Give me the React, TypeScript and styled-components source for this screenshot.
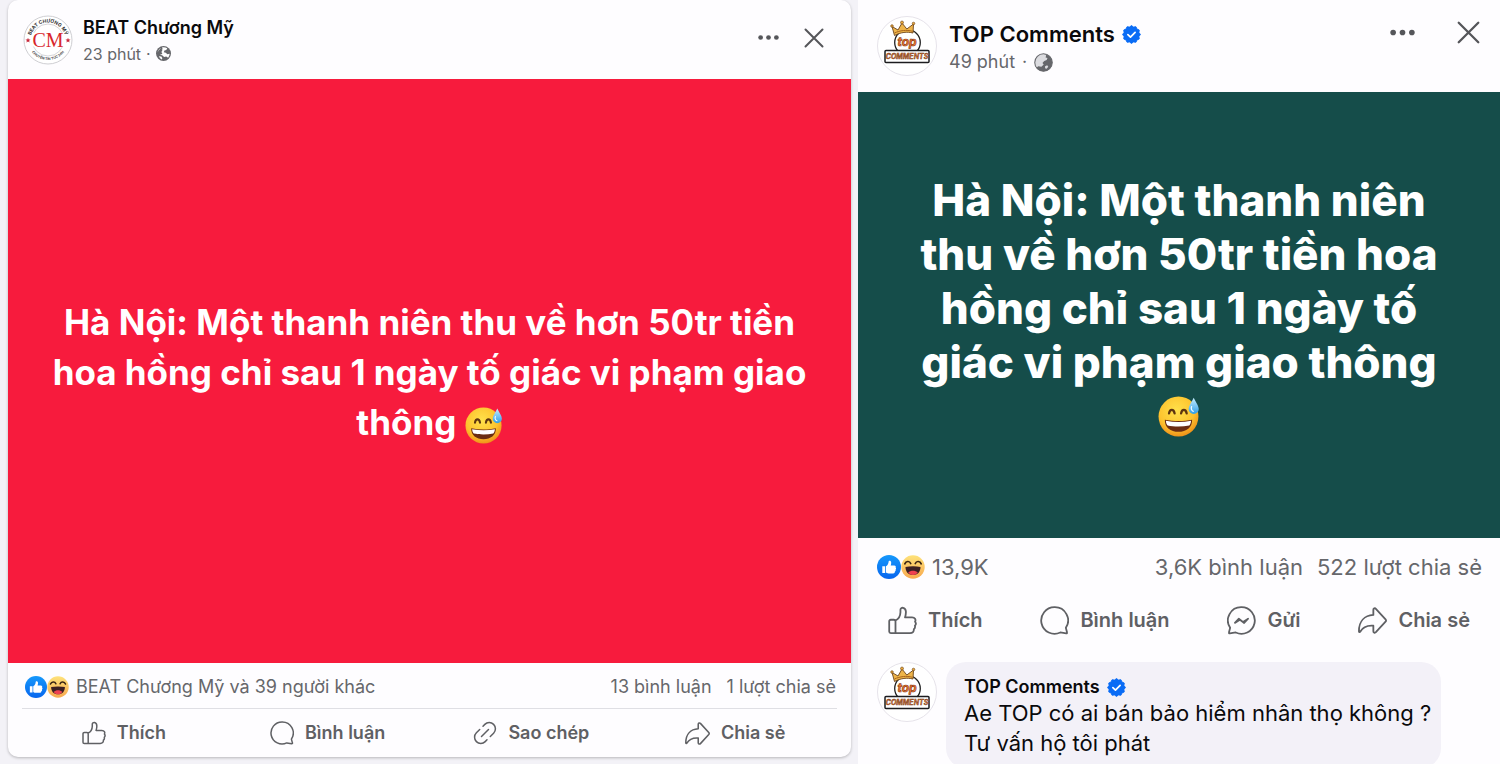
import React, { useId } from "react";
import styled, { createGlobalStyle } from "styled-components";

const GlobalStyle = createGlobalStyle`
  *, *::before, *::after { box-sizing: border-box; }
  body {
    margin: 0;
    background: #f3f2f7;
    font-family: Inter, "Liberation Sans", sans-serif;
    color: #0a0a0c;
  }
  h2, p { margin: 0; font-weight: inherit; font-size: inherit; }
`;

const Page = styled.main`
  display: grid;
  grid-template-columns: minmax(0, 843fr) minmax(0, 642fr);
  gap: 7px;
  height: 100vh;
  padding-left: 8px;
  align-items: start;
  overflow-y: auto;
  scrollbar-width: none;
`;

const Post = styled.article<{ $card?: boolean }>`
  display: flex;
  flex-direction: column;
  background: #fefdff;
  border-radius: ${(p) => (p.$card ? "10px" : "0")};
  box-shadow: ${(p) => (p.$card ? "0 1px 3px rgba(0, 0, 0, 0.25)" : "none")};
`;

const Header = styled.header<{ $large?: boolean }>`
  display: flex;
  align-items: center;
  gap: ${(p) => (p.$large ? "12px" : "10px")};
  height: ${(p) => (p.$large ? "92px" : "79px")};
  padding: ${(p) => (p.$large ? "0 20px 0 19px" : "0 27px 0 15px")};
`;

const Identity = styled.div<{ $large?: boolean }>`
  display: flex;
  flex-direction: column;
  flex: 1;
  gap: ${(p) => (p.$large ? "4px" : "2px")};
  padding-top: ${(p) => (p.$large ? "4px" : "2px")};
`;

const Name = styled.h2<{ $size: number }>`
  display: flex;
  align-items: center;
  gap: 7px;
  font-size: ${(p) => p.$size}px;
  font-weight: 600;
  line-height: 24px;
`;

const Meta = styled.p<{ $large?: boolean }>`
  display: flex;
  align-items: center;
  gap: ${(p) => (p.$large ? "7px" : "5px")};
  color: #66676b;
  font-size: ${(p) => (p.$large ? "18px" : "16px")};
  line-height: 24px;
`;

const HeaderActions = styled.div<{ $large?: boolean }>`
  display: flex;
  align-items: center;
  gap: ${(p) => (p.$large ? "42px" : "25px")};
  padding-bottom: ${(p) => (p.$large ? "28px" : "4px")};
`;

const IconButton = styled.button`
  display: flex;
  padding: 0;
  border: 0;
  background: none;
  color: #55565a;
  cursor: pointer;
`;

const Banner = styled.div<{ $tone: "red" | "green" }>`
  display: flex;
  flex-direction: column;
  align-items: center;
  justify-content: center;
  min-height: ${(p) => (p.$tone === "red" ? "584px" : "446px")};
  padding: ${(p) => (p.$tone === "red" ? "2px 0 0" : "0 0 14px")};
  background: ${(p) => (p.$tone === "red" ? "#f71b3d" : "#154d4a")};
  color: #fff;
  font-size: ${(p) => (p.$tone === "red" ? "35px" : "44px")};
  line-height: ${(p) => (p.$tone === "red" ? "50px" : "54px")};
  font-weight: ${(p) => (p.$tone === "red" ? 700 : 800)};
  text-align: center;
  white-space: nowrap;

  p svg { vertical-align: middle; }
  > svg { margin: 6px 0; }
`;

const Stats = styled.div<{ $large?: boolean }>`
  display: flex;
  align-items: center;
  gap: ${(p) => (p.$large ? "14px" : "15px")};
  height: ${(p) => (p.$large ? "58px" : "45px")};
  padding: ${(p) => (p.$large ? "0 18px 0 19px" : "2px 15px 0 17px")};
  color: #66676b;
  font-size: ${(p) => (p.$large ? "22px" : "18px")};
  line-height: 28px;
`;

const Reactions = styled.div`
  display: flex;
  align-items: center;
  flex: 1;

  svg + span { margin-left: 7px; }
`;

const Actions = styled.div`
  display: grid;
  grid-template-columns: repeat(4, 1fr);
  height: 49px;
  margin: 0 14px;
  border-top: 1px solid #dfdfe4;
`;

const WideActions = styled.div`
  display: flex;
  justify-content: space-between;
  height: 48px;
  padding: 0 30px;
`;

const Action = styled.button<{ $large?: boolean }>`
  display: flex;
  align-items: center;
  justify-content: center;
  gap: 11px;
  padding: 0;
  border: 0;
  background: none;
  color: #5f6064;
  font-family: inherit;
  font-size: ${(p) => (p.$large ? "20px" : "18px")};
  font-weight: 600;
  line-height: 28px;
  cursor: pointer;
`;

const Comment = styled.section`
  display: flex;
  align-items: flex-start;
  gap: 9px;
  padding: 18px 19px 0;
`;

const Bubble = styled.div`
  padding: 14px 10px 10px 18px;
  border-radius: 20px;
  background: #f3f1f8;
  font-size: 22px;
  line-height: 30px;
  white-space: nowrap;

  h2 { line-height: 22px; }
`;

function BeatLogo() {
  const id = useId();
  return (
    <svg width="50" height="50" viewBox="0 0 50 50" role="img" aria-label="BEAT Chương Mỹ">
      <defs>
        <path id={id + "t"} d="M7.500 25a17.500 17.500 0 0 1 35 0" />
        <path id={id + "b"} d="M4.500 24.500a20.500 20.500 0 0 0 41 0" />
      </defs>
      <circle cx="25" cy="25" r="24" fill="#fff" stroke="#cfcfd3" />
      <circle cx="25" cy="25" r="16" fill="none" stroke="#c4c4c8" strokeWidth=".7" />
      <rect x="7" y="18" width="36" height="13.500" fill="#fff" />
      <text fontSize="4.900" fontWeight="700" fill="#333" textAnchor="middle">
        <textPath href={"#" + id + "t"} startOffset="50%">BEAT CHƯƠNG MỸ</textPath>
      </text>
      <text fontSize="3.400" fontWeight="700" fill="#444" textAnchor="middle">
        <textPath href={"#" + id + "b"} startOffset="50%">CHUYÊN TIN TỨC 24H</textPath>
      </text>
      <text x="25" y="31.500" fontFamily="Liberation Serif, serif" fontSize="20" fill="#d8262c" textAnchor="middle">CM</text>
      <path d="M5 22.800l.7 1.700 1.800.1-1.400 1.200.5 1.800L5 26.600l-1.600 1 .5-1.800-1.400-1.200 1.800-.1zM45 22.800l.7 1.700 1.800.1-1.400 1.200.5 1.800-1.600-1-1.600 1 .5-1.800-1.400-1.200 1.800-.1z" fill="#c9273a" />
    </svg>
  );
}

function TopLogo() {
  return (
    <svg width="60" height="60" viewBox="0 0 60 60" role="img" aria-label="TOP Comments">
      <circle cx="30" cy="30" r="29.500" fill="#fff" stroke="#e6e3ea" />
      <circle cx="30.500" cy="26.500" r="12.800" fill="#fff" stroke="#222" strokeWidth="1.300" />
      <path d="M17.500 19.500L15 10.500l6 3.500L25 7l4.800 6 6.700-5-.5 9c-6-1.500-12-.8-18.500 2.500z" fill="#eeb54a" stroke="#6b431b" strokeWidth=".9" strokeLinejoin="round" />
      <path d="M17.500 17c5.500-2.500 12-3.500 18-1.700" fill="none" stroke="#a8641d" strokeWidth="1" />
      <g fill="#e9a93b" stroke="#6b431b" strokeWidth=".6"><circle cx="15" cy="10" r="1.300" /><circle cx="25" cy="6.500" r="1.500" /><circle cx="36.500" cy="7.500" r="1.300" /></g>
      <text x="30" y="30" fontSize="12" fontWeight="700" fontStyle="italic" fill="#ee7a35" stroke="#8a3510" strokeWidth=".6" textAnchor="middle">top</text>
      <rect x="8" y="34.500" width="44" height="12" rx="1" fill="#fff" stroke="#1c1c1f" strokeWidth="1.500" />
      <text x="30" y="43" fontSize="7" fontWeight="700" fontStyle="italic" fill="#dd7c3b" stroke="#6b2f12" strokeWidth=".4" textAnchor="middle">COMMENTS</text>
    </svg>
  );
}

function Verified() {
  const points = Array.from({ length: 24 }, (_, i) => {
    const r = i % 2 ? 8.1 : 9.4;
    const a = (i * Math.PI) / 12;
    return `${10 + r * Math.cos(a)},${10 + r * Math.sin(a)}`;
  }).join(" ");
  return (
    <svg width="19" height="19" viewBox="0 0 20 20" aria-hidden="true">
      <polygon points={points} fill="#0a6cf5" stroke="#0a6cf5" strokeLinejoin="round" />
      <path d="M6.200 10.200l2.700 2.600 4.900-5" fill="none" stroke="#fff" strokeWidth="1.800" strokeLinecap="round" strokeLinejoin="round" />
    </svg>
  );
}

function Globe({ size }: { size: number }) {
  return (
    <svg width={size} height={size} viewBox="0 0 16 16" aria-label="Công khai">
      <circle cx="8" cy="8" r="8" fill="#66676b" />
      <path d="M6.500 1.400C8.500 1 10.500 1.400 12 2.500L11 4.200 9 4.800 8.300 6.600l2.200.6 1.600 1.600 2.400-.6c0 1.500-.6 3-1.600 4.200l-2-1.200-2.300.6L7 10.200 4.800 9.400 3.600 7.200l-1.800-.8C2.300 4.800 3.300 3.400 4.700 2.400L5.500 4 7 3.200z" fill="#fff" />
      <path d="M2.300 5.200l2.500-2.600L7 4 5.800 6.500l1 2L4.500 9 2 8z" fill="#66676b" />
      <path d="M3 10.800l2.700.4 1 1.500-.4 1.600C4.900 13.700 3.700 12.500 3 10.800z" fill="#fff" />
    </svg>
  );
}

function NightGlobe({ size }: { size: number }) {
  return (
    <svg width={size} height={size} viewBox="0 0 18 18" aria-label="Công khai">
      <circle cx="9" cy="9" r="8.300" fill="#dcdce0" stroke="#66676b" strokeWidth="1" />
      <path d="M9.500 1l2 1.200-.5 2 1.800.5-.8 2-2.300.8-1.700 2 1.200 1.500-2.200 2L4 12.500 2.300 14A8.300 8.300 0 0 0 9 17.300 8.300 8.300 0 0 0 17.300 9 8.300 8.300 0 0 0 9.500 1z" fill="#66676b" />
      <path d="M10.500 12.500l2-1 1 1.500-1.500 2-1.500-.5z" fill="#dcdce0" />
    </svg>
  );
}

function Dots({ size }: { size: number }) {
  return (
    <svg width={size} height={size} viewBox="0 0 24 24" fill="currentColor" aria-hidden="true">
      <circle cx="3" cy="12" r="2.700" /><circle cx="12" cy="12" r="2.700" /><circle cx="21" cy="12" r="2.700" />
    </svg>
  );
}

function Close({ size }: { size: number }) {
  return (
    <svg width={size} height={size} viewBox="0 0 20 20" fill="none" stroke="currentColor" strokeWidth="2" strokeLinecap="round" aria-hidden="true">
      <path d="M1.500 1.500l17 17M18.500 1.500l-17 17" />
    </svg>
  );
}

function LikeBadge({ size }: { size: number }) {
  const id = useId();
  return (
    <svg width={size} height={size} viewBox="0 0 24 24" aria-hidden="true">
      <linearGradient id={id} x2="0" y2="1"><stop stopColor="#1598fb" /><stop offset="1" stopColor="#0866ee" /></linearGradient>
      <circle cx="12" cy="12" r="12" fill={`url(#${id})`} />
      <path d="M5.300 11.200h2.900v6.900H5.300zM9 11.300c1.700-1 2.500-2.600 2.600-4.500 0-1.600 2.600-1.500 2.600.9 0 1-.2 1.800-.5 2.700h3.600c1.300 0 1.900 1.200 1.300 2.200.7.700.6 1.700-.1 2.200.4.900 0 1.600-.7 1.900.1 1-.5 1.700-1.700 1.700h-3.500c-1.500 0-2.500-.3-3.600-1z" fill="#fff" />
    </svg>
  );
}

function HahaBadge({ size }: { size: number }) {
  const id = useId();
  return (
    <svg width={size} height={size} viewBox="0 0 24 24" aria-hidden="true">
      <linearGradient id={id} x2="0" y2="1"><stop stopColor="#fee27a" /><stop offset="1" stopColor="#f8a94f" /></linearGradient>
      <circle cx="12" cy="12" r="11.700" fill={`url(#${id})`} />
      <path d="M3.800 8.800C5 6 8.500 5.600 9.700 8.500M14.300 8.500c1.200-2.900 4.700-2.500 5.900.3" fill="none" stroke="#3a2413" strokeWidth="1.700" strokeLinecap="round" />
      <path d="M4.500 12c4.500-.9 10.500-.9 15 0 0 5-3 8-7.500 8s-7.500-3-7.500-8z" fill="#3b1f22" />
      <path d="M7.200 17.500c2.500-2.500 7.100-2.500 9.600 0C15.500 19.200 14 20 12 20s-3.500-.8-4.800-2.500z" fill="#ef4150" />
    </svg>
  );
}

function SweatSmile({ size }: { size: number }) {
  const id = useId();
  return (
    <svg width={size} height={size} viewBox="0 0 40 40" role="img" aria-label="😅">
      <radialGradient id={id + "f"} cx=".45" cy=".35" r=".68"><stop stopColor="#ffe14b" /><stop offset=".65" stopColor="#fdc32e" /><stop offset="1" stopColor="#ee8b17" /></radialGradient>
      <linearGradient id={id + "d"} x2="0" y2="1"><stop stopColor="#c8efff" /><stop offset="1" stopColor="#2f9ee8" /></linearGradient>
      <circle cx="19.500" cy="20.500" r="19" fill={`url(#${id}f)`} />
      <path d="M10.500 17.500c.8-4.500 4.500-4.500 5.300 0M22 17.500c.8-4.500 4.500-4.500 5.300 0" fill="none" stroke="#5d3510" strokeWidth="2.200" strokeLinecap="round" />
      <path d="M6.500 23.500c8.500 1.800 18 1.800 26 0 .2 7.500-5.500 11.500-13 11.500s-13.200-4-13-11.500z" fill="#6b2c12" />
      <path d="M7.500 24.500c8 1.500 16.500 1.500 24 0-.3 2.500-.9 3.600-1.700 4.500-6.500 1.200-14.600 1.200-20.600 0-.8-.9-1.500-2-1.700-4.500z" fill="#fff" />
      <path d="M34 2.500c1.800 4 4.800 7.500 4.800 10.800a4.800 4.800 0 0 1-9.600 0c0-3.300 3-6.800 4.800-10.800z" fill={`url(#${id}d)`} />
      <path d="M32 11c-.8 2 0 4 1.600 4.500" fill="none" stroke="#f2fcff" strokeWidth="1.200" strokeLinecap="round" />
    </svg>
  );
}

const LineIcon = styled.svg.attrs({ viewBox: "0 0 24 24", "aria-hidden": true })<{ $size: number }>`
  width: ${(p) => p.$size}px;
  height: ${(p) => p.$size}px;
  flex: none;
  fill: none;
  stroke: currentColor;
  stroke-width: 1.5;
  stroke-linecap: round;
  stroke-linejoin: round;
`;

const LikeIcon = ({ size }: { size: number }) => (
  <LineIcon $size={size}>
    <path d="M6.200 22.500H2.300a1.300 1.300 0 0 1-1.300-1.300V12.700a1.300 1.300 0 0 1 1.300-1.300h2.600a1.300 1.300 0 0 1 1.300 1.300zM6.200 12c2.600-1.200 4-3.600 4.100-6.800V3.100c0-2.400 4.300-2.400 4.500 1.500.1 1.600-.2 3.200-.7 4.800h5.800c2.400 0 3.400 1.900 2.500 3.600.8 1 .8 2.400-.1 3.300.3 1.200 0 2.200-.9 2.900.1 2-1 3.300-3.200 3.300H6.200" />
  </LineIcon>
);

const CommentIcon = ({ size }: { size: number }) => (
  <LineIcon $size={size}>
    <path d="M12 1a11 11 0 1 0 4.800 20.900l4.900.8c.5.100.9-.3.700-.8l-1-3.800A11 11 0 0 0 12 1z" />
  </LineIcon>
);

const CopyIcon = ({ size }: { size: number }) => (
  <LineIcon $size={size}>
    <path d="M10 5.200l1.800-1.800a6.200 6.200 0 0 1 8.800 8.800l-3.300 3.300M14 18.800l-1.800 1.800a6.200 6.200 0 0 1-8.800-8.800l3.300-3.300M8.500 15.500l7-7" />
  </LineIcon>
);

const ShareIcon = ({ size }: { size: number }) => (
  <LineIcon $size={size}>
    <path d="M12.700 7.400V3.200c0-1.200 1.300-1.700 2.100-.9l8 8.700c.5.600.5 1.400 0 2l-8 8.700c-.8.800-2.100.3-2.100-.9v-4.500C7.500 15.900 4 17.300 1.800 21.300c-.3.500-1 .3-1-.3C.7 12.500 5.500 7.900 12.700 7.400z" />
  </LineIcon>
);

const SendIcon = ({ size }: { size: number }) => (
  <LineIcon $size={size}>
    <path d="M12 1a11 11 0 1 1-4.800 20.900l-4.900.8c-.5.100-.9-.3-.7-.8l1-3.800A11 11 0 0 1 12 1z" />
    <path d="M6.500 14l3.300-3.500 3.400 2.700 4.300-2.700-3.300 3.600-3.500-2.700z" strokeWidth="1.400" />
  </LineIcon>
);

export default function App() {
  return (
    <>
      <GlobalStyle />
      <Page>
        <Post $card>
          <Header>
            <BeatLogo />
            <Identity>
              <Name $size={18}>BEAT Chương Mỹ</Name>
              <Meta>23 phút <span>·</span> <Globe size={15} /></Meta>
            </Identity>
            <HeaderActions>
              <IconButton aria-label="Tùy chọn khác"><Dots size={21} /></IconButton>
              <IconButton aria-label="Đóng"><Close size={20} /></IconButton>
            </HeaderActions>
          </Header>
          <Banner $tone="red">
            <p>
              Hà Nội: Một thanh niên thu về hơn 50tr tiền<br />
              hoa hồng chỉ sau 1 ngày tố giác vi phạm giao<br />
              thông <SweatSmile size={38} />
            </p>
          </Banner>
          <Stats>
            <Reactions><LikeBadge size={22} /><HahaBadge size={22} /><span>BEAT Chương Mỹ và 39 người khác</span></Reactions>
            <span>13 bình luận</span>
            <span>1 lượt chia sẻ</span>
          </Stats>
          <Actions>
            <Action><LikeIcon size={24} />Thích</Action>
            <Action><CommentIcon size={24} />Bình luận</Action>
            <Action><CopyIcon size={24} />Sao chép</Action>
            <Action><ShareIcon size={25} />Chia sẻ</Action>
          </Actions>
        </Post>

        <Post>
          <Header $large>
            <TopLogo />
            <Identity $large>
              <Name $size={22}>TOP Comments <Verified /></Name>
              <Meta $large>49 phút <span>·</span> <NightGlobe size={19} /></Meta>
            </Identity>
            <HeaderActions $large>
              <IconButton aria-label="Tùy chọn khác"><Dots size={25} /></IconButton>
              <IconButton aria-label="Đóng"><Close size={23} /></IconButton>
            </HeaderActions>
          </Header>
          <Banner $tone="green">
            <p>
              Hà Nội: Một thanh niên<br />
              thu về hơn 50tr tiền hoa<br />
              hồng chỉ sau 1 ngày tố<br />
              giác vi phạm giao thông
            </p>
            <SweatSmile size={42} />
          </Banner>
          <Stats $large>
            <Reactions><LikeBadge size={24} /><HahaBadge size={24} /><span>13,9K</span></Reactions>
            <span>3,6K bình luận</span>
            <span>522 lượt chia sẻ</span>
          </Stats>
          <WideActions>
            <Action $large><LikeIcon size={29} />Thích</Action>
            <Action $large><CommentIcon size={29} />Bình luận</Action>
            <Action $large><SendIcon size={29} />Gửi</Action>
            <Action $large><ShareIcon size={29} />Chia sẻ</Action>
          </WideActions>
          <Comment>
            <TopLogo />
            <Bubble>
              <Name $size={18}>TOP Comments <Verified /></Name>
              <p>Ae TOP có ai bán bảo hiểm nhân thọ không ?<br />Tư vấn hộ tôi phát</p>
            </Bubble>
          </Comment>
        </Post>
      </Page>
    </>
  );
}
